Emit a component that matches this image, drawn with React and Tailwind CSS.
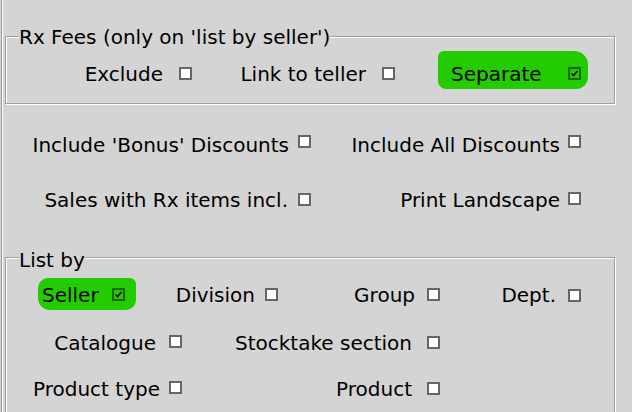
import React from "react";

// 체크박스
const Check = ({ on, className = "" }) =>
  on ? (
    <span className={`flex h-[13px] w-[13px] shrink-0 items-center justify-center border-2 border-[#1d6600] bg-[#22cc00] ${className}`}>
      <svg width="9" height="9" viewBox="0 0 9 9">
        <path d="M1.5 4.5 L3.5 6.5 L7.5 2" fill="none" stroke="#000" strokeWidth="1.6" />
      </svg>
    </span>
  ) : (
    <span className={`h-[13px] w-[13px] shrink-0 border-2 border-[#666] bg-white ${className}`} />
  );

// 라벨 + 체크박스
const Item = ({ label, w, gap, on, chk = "" }) => (
  <div className={`flex items-center justify-end ${w} ${gap}`}>
    <span className="mt-[1px] whitespace-nowrap">{label}</span>
    <Check on={on} className={chk} />
  </div>
);

const Group = ({ title, legendPad = "", children, className = "" }) => (
  <fieldset
    className={`w-[610px] border border-[#a0a0a0] shadow-[1px_1px_0_#fff,inset_1px_1px_0_#fff] ${className}`}
  >
    <legend className={`ml-[13px] bg-[#d4d4d4] leading-[24px] ${legendPad}`}>{title}</legend>
    {children}
  </fieldset>
);

const App = () => {
  return (
    <div className="h-[412px] w-full overflow-hidden bg-[#d4d4d4] pl-[5px] font-['DejaVu_Sans',sans-serif] text-[20px] text-black shadow-[inset_1px_0_0_#d4d4d4,inset_2px_0_0_#9a9a9a,inset_3px_0_0_#fff]">
      <Group title="Rx Fees (only on 'list by seller')" legendPad="pt-[2px]" className="mt-[23px] pb-[6px]">
        <div className="flex h-[48px] items-center">
          <Item label="Exclude" w="w-[186px]" gap="gap-[16px]" />
          <Item label="Link to teller" w="w-[203px]" gap="gap-[16px]" />
          <div className="ml-[43px] mb-[7px] flex h-[38px] w-[150px] items-center justify-between rounded-tl-[6px] rounded-tr-[14px] rounded-br-[12px] rounded-bl-[8px] bg-[#22cc00] pt-[8px] pl-[13px] pr-[7px]">
            <span>Separate</span>
            <Check on className="mb-[1px]" />
          </div>
        </div>
      </Group>

      <div className="mt-[12px] flex h-[56px] items-center">
        <Item label="Include 'Bonus' Discounts" w="w-[306px]" gap="gap-[9px]" chk="mb-[5px]" />
        <Item label="Include All Discounts" w="w-[270px]" gap="gap-[8px]" chk="mb-[5px]" />
      </div>
      <div className="flex h-[54px] items-center">
        <Item label="Sales with Rx items incl." w="w-[306px]" gap="gap-[10px]" />
        <Item label="Print Landscape" w="w-[270px]" gap="gap-[8px]" chk="mb-[2px]" />
      </div>

      <Group title="List by" legendPad="pt-[6px]" className="mt-[16px] pb-[30px]">
        <div className="flex h-[44px] items-center">
          <div className="ml-[32px] flex h-[32px] w-[98px] items-center justify-between rounded-tl-[10px] rounded-tr-[6px] rounded-br-[10px] rounded-bl-[12px] bg-[#22cc00] pt-[1px] pl-[4px] pr-[11px]">
            <span>Seller</span>
            <Check on />
          </div>
          <Item label="Division" w="w-[142px]" gap="gap-[10px]" />
          <Item label="Group" w="w-[162px]" gap="gap-[12px]" />
          <Item label="Dept." w="w-[141px]" gap="gap-[12px]" chk="mt-[2px]" />
        </div>
        <div className="flex h-[52px] items-center">
          <Item label="Catalogue" w="w-[176px]" gap="gap-[13px]" chk="mb-[2px]" />
          <Item label="Stocktake section" w="w-[258px]" gap="gap-[15px]" />
        </div>
        <div className="flex h-[40px] items-center">
          <Item label="Product type" w="w-[176px]" gap="gap-[9px]" chk="mb-[2px]" />
          <Item label="Product" w="w-[258px]" gap="gap-[15px]" />
        </div>
      </Group>
    </div>
  );
};

export default App;
